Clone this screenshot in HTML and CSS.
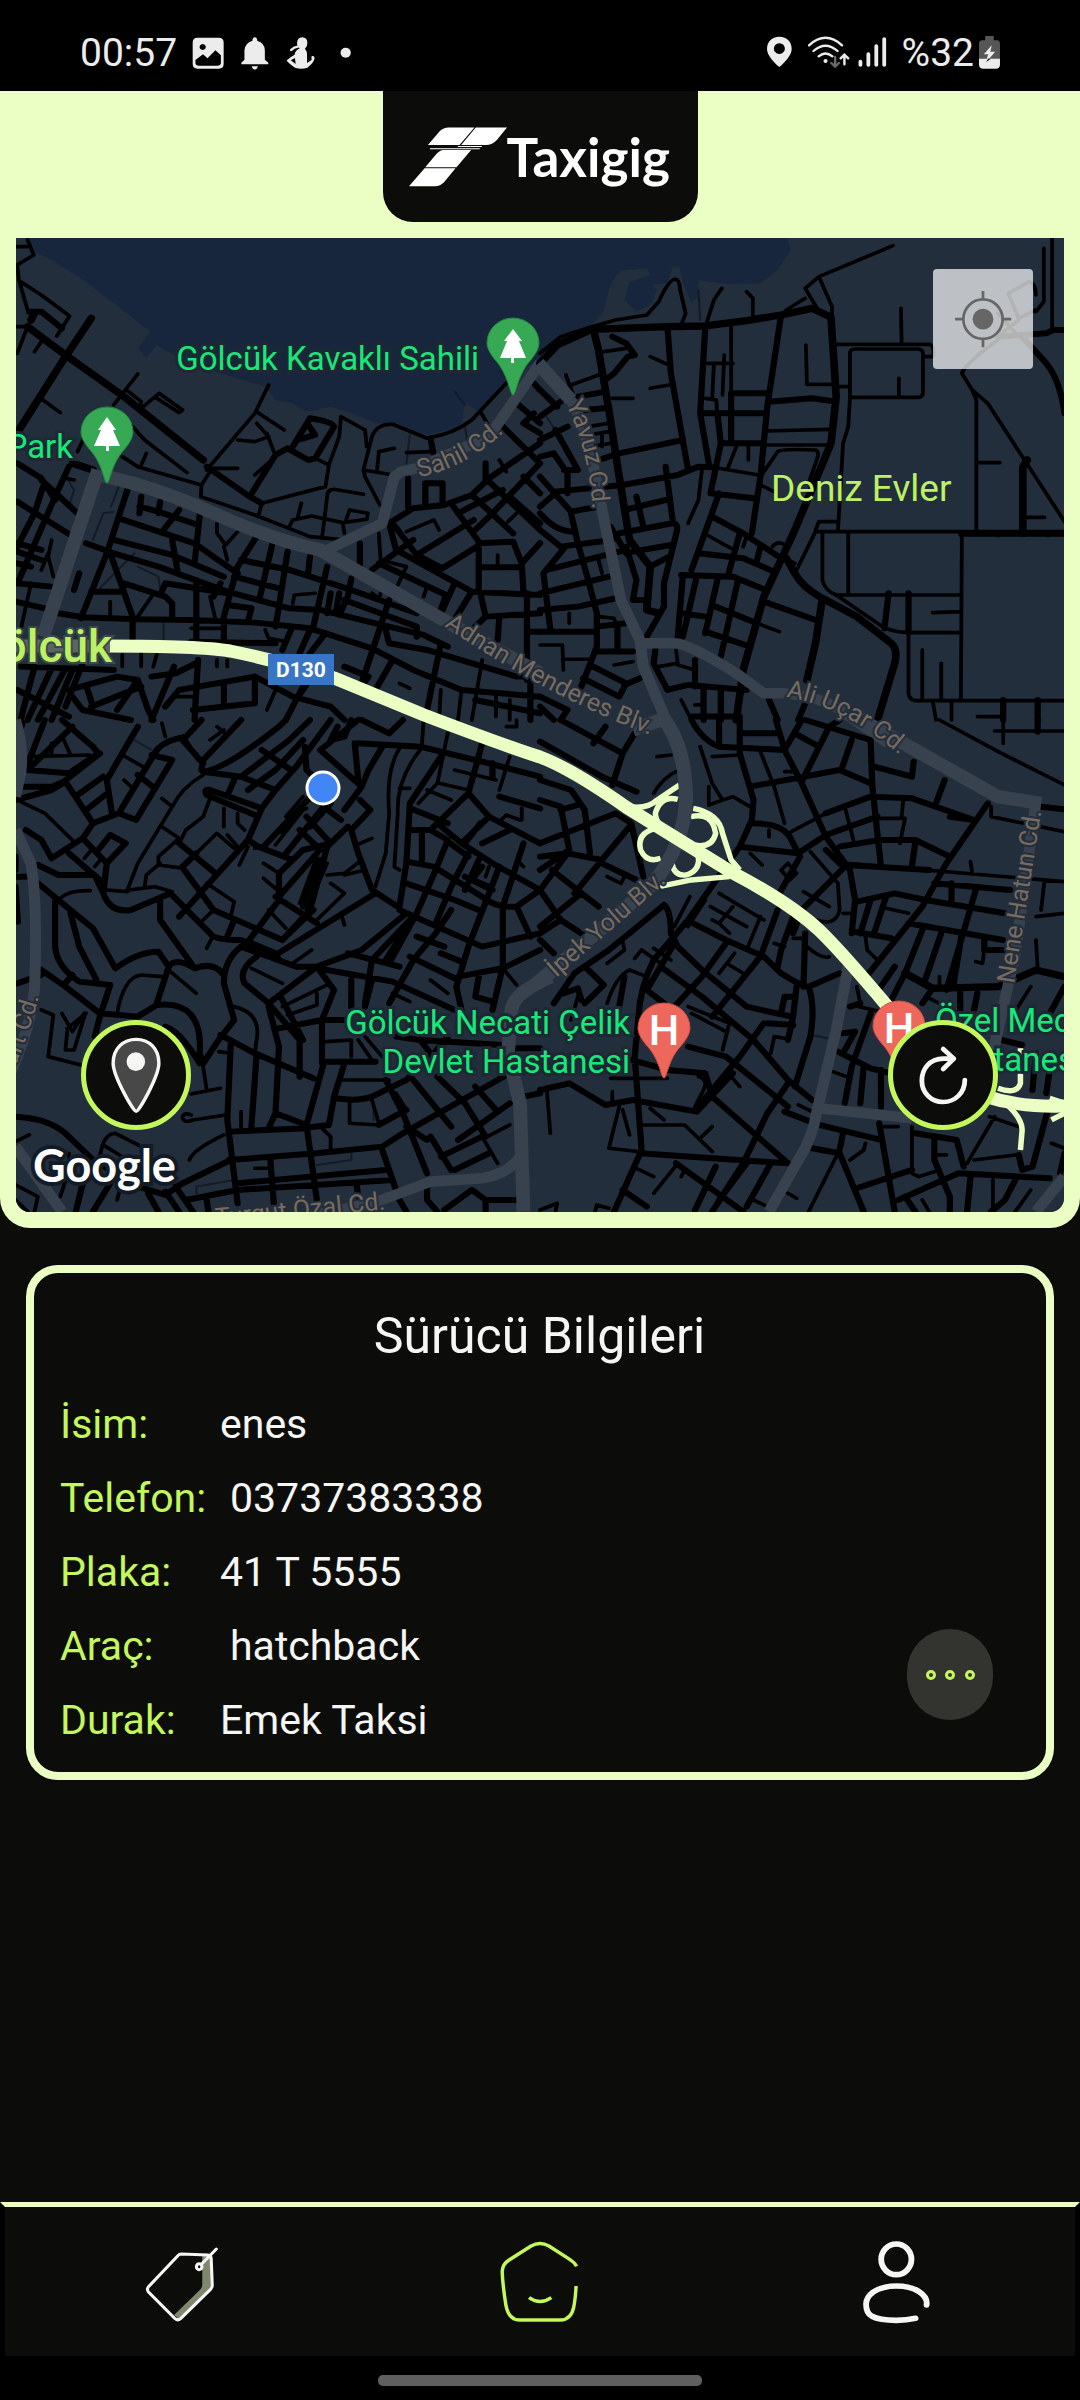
FILE: index.html
```html
<!DOCTYPE html>
<html lang="tr">
<head>
<meta charset="utf-8">
<meta name="viewport" content="width=device-width, initial-scale=1">
<title>Taxigig</title>
<link rel="stylesheet" href="styles.css">
</head>
<body>
<div class="statusbar">
  <div class="statusbar-left">
    <span class="status-text">00:57</span>
    <svg width="32" height="40" viewBox="558 100 93 120" preserveAspectRatio="none" aria-hidden="true"><path class="status-fill" fill-rule="evenodd" d="M574 114H636Q650 114 650 128V193Q650 207 636 207H574Q560 207 560 193V128Q560 114 574 114ZM568 181V191Q569 198 578 198H632Q641 198 642 190V167L626 152L603 176L590 164ZM589 133a9 9 0 1 0 .1 0Z"/></svg>
    <svg width="28" height="40" viewBox="702 100 81 120" preserveAspectRatio="none" aria-hidden="true"><path class="status-fill" d="M703 194V189L712 180V152Q713 130 735 123Q735 114 742 113Q749 114 749 123Q771 130 771 152V180L781 189V194ZM733 200H751Q748 210 742 210Q736 210 733 200Z"/></svg>
    <svg width="30" height="40" viewBox="836 100 87 120" preserveAspectRatio="none" aria-hidden="true"><path class="status-fill" fill-rule="evenodd" d="M883 113Q898 114 898 130Q898 142 891 147Q898 155 897 167V190L910 181V170Q918 166 919 175Q918 188 898 204Q880 210 862 204Q845 192 838 183Q840 178 861 165Q862 153 876 146Q868 141 868 130Q869 114 883 113ZM862 175L850 182L864 193Z"/><path class="status-line" d="M851 151Q858 143 870 141"/></svg>
    <svg width="24" height="40" viewBox="976 100 70 120" preserveAspectRatio="none" aria-hidden="true"><ellipse class="status-fill" cx="1013" cy="159" rx="15" ry="15"/></svg>
  </div>
  <div class="statusbar-right">
    <svg width="36" height="40" viewBox="659 100 105 120" preserveAspectRatio="none" aria-hidden="true"><path class="status-fill" fill-rule="evenodd" d="M695 111C717 111 731 126 731 148C731 166 712 188 695 202C678 188 659 166 659 148C659 126 673 111 695 111ZM695 131a16 16 0 1 0 .1 0Z"/></svg>
    <svg width="45" height="40" viewBox="776 100 131 120" preserveAspectRatio="none" aria-hidden="true"><path class="status-line" d="M779 137Q827 92 875 137M792 154Q827 122 862 154M807 170Q827 153 847 170M882 194V166M871 176L882 165L893 176"/><path class="status-line status-muted" d="M855 172V200M844 190L855 201L866 190"/><circle class="status-fill" cx="827" cy="184" r="6"/></svg>
    <svg width="39" height="40" viewBox="922 100 113 120" preserveAspectRatio="none" aria-hidden="true"><path class="status-bars" d="M929 186V196M952 163V196M975 139V196M998 118V196"/></svg>
    <span class="status-text">%32</span>
    <svg width="22" height="40" viewBox="1275 100 64 120" preserveAspectRatio="none" aria-hidden="true"><path fill="#565656" d="M1293 109H1318V122H1328Q1336 123 1336 132V180H1275V132Q1275 123 1284 122H1293Z"/><path class="status-fill" d="M1275 177H1336V196Q1335 207 1325 207H1287Q1276 207 1275 196ZM1312 137L1289 164H1302L1297 178H1304L1322 156H1308Z"/><path d="M1302 177L1295 188L1309 177Z"/></svg>
  </div>
</div>

<header class="top-panel">
  <div class="brand">
    <svg class="brand-mark" width="98" height="60" viewBox="87 104 295 180" aria-hidden="true"><path d="M144 158L180 116Q191 105 206 105H284L239 158ZM288 105H382L352 142Q338 158 318 158H244ZM192 173H274L230 225H136L165 190Q178 173 192 173ZM134 228H227L195 267Q183 282 165 282H87ZM234 161H306V164H234ZM150 168H300V171H150Z"/></svg>
    <span class="brand-name">Taxigig</span>
  </div>
  <section class="map" aria-label="Harita">
    <svg class="map-canvas" viewBox="16 238 1048 974" role="img" aria-label="Gölcük">
      <defs>
        <path id="p-sahil" d="M419 477Q466 468 504 432L560 380"/>
        <path id="p-yavuz" d="M566 404Q588 450 592 502V580"/>
        <path id="p-adnan" d="M444 626Q540 692 640 731L740 770"/>
        <path id="p-ali" d="M786 697Q840 706 890 747L950 796"/>
        <path id="p-ipek" d="M556 978L664 884L740 818"/>
        <path id="p-nene" d="M1014 984L1040 820L1053 738"/>
        <path id="p-turgut" d="M216 1226L480 1200"/>
        <path id="p-yurt" d="M9 1080Q28 1040 42 986L62 909"/>
      </defs>
      <rect class="land" x="16" y="238" width="1048" height="974"/>
      <g transform="translate(0 230) scale(.3444 .3333)">
        <path class="water" d="M70 0L90 60C150 85 200 125 250 155L437 305L400 355L425 385L455 345L520 385L640 430L770 470L800 510L850 520L890 545L960 530L1020 548L1090 580L1130 578L1240 615L1340 590L1350 520L1390 545L1470 460L1570 380V0Z"/>
        <path class="road dim" d="M345 770L322 830M270 930L300 850L330 845M1190 615L1180 700M1350 590L1358 640M290 1075L390 970M400 1010L460 1040L465 1075M475 1180V1240M195 745L215 780L200 830M1320 485L1350 525"/>
        <path class="road thin" d="M80 30L98 75L50 105L55 150L80 240M60 155L120 195L202 258L165 318M50 290H80L50 370M100 365L120 335M118 505L175 548M330 525L400 432M365 478L410 515L405 540L462 490L530 540L520 548L455 505M780 465L740 550L600 720M745 545L825 600M745 580L780 620L740 635L690 630M620 715H690M775 610L795 665M740 735L800 680M385 590L420 630L543 728M410 705L425 670M355 680L400 710L585 765L583 800L740 855L900 920L985 928M585 765L610 725M750 860L760 820L945 770L955 705L915 685M955 705L985 620L990 560L1060 600L1065 650M1055 720L1080 620Q1095 580 1140 583L1240 625Q1320 610 1370 570L1470 460M1055 720L1060 740L1103 825M1055 720L1130 733M1095 720L1100 665L1145 655M1180 668L1250 665M1395 545L1415 580M935 925L950 800Q950 778 970 778L1055 793M840 890L850 870L905 858L995 878L1065 868L1068 850L1015 840L1005 870M875 820L865 860M995 878L1000 910M630 880V910L655 945L690 905M45 50H80M555 1195H640M850 1120L855 1095L915 1090M320 1115V1160M400 1160L440 1100M610 1100L625 1165M355 1275V1310M410 1270V1310M455 1275L445 1310M630 1290v20M660 1290v20M510 1400h60M775 1440L800 1380M1180 905L1260 870L1275 900M1445 975V1010M1450 690L1470 725M1500 850L1475 875M1240 1070L1230 1100M1100 910L1105 990L1180 1010M1180 1010L1155 1065M1160 1360L1190 1375M1100 1110L1105 1090M150 930L140 980L155 1040M120 1020L140 970M90 1060L60 1200M1080 1090L1105 1110M770 1200L780 1225L830 1235M650 950L660 990M1400 1290L1370 1470M1340 1380L1330 1470M1280 1380L1275 1470M250 610L225 665M190 745L215 750M1440 1400V1460M1480 1410V1470"/>
        <path class="road mid" d="M600 710L725 800L760 820M725 800L800 675L835 655L895 690L915 685L970 590Q965 575 900 565L850 650M865 630L915 615L895 585M85 245L120 245L180 295M1250 625L1258 668M50 700L120 745L160 810M50 815L150 880L205 915M120 750L225 850M200 710L160 800L55 1050M125 770L100 850L50 950M50 940L120 960M50 965l70 25M50 1000L90 1010M45 1115L130 1135M170 1150L240 1162L400 1168L560 1170L740 1178L900 1195L945 1210M370 780L310 970L235 1165M345 865L565 940L640 995L690 1030M330 930L500 975L650 1040M250 940L330 970L460 1010L660 1085L840 1135L930 1140L1090 1180L1230 1215L1300 1250M320 970L385 1160V1225M580 855L565 1000M405 830L460 845L575 885M410 800L405 850M465 815L460 850M520 840L475 900M500 930L515 1020M745 920L690 1010L650 1160V1235M790 945L755 1100M835 965L810 1130L800 1190M900 980L895 1025M950 1010L910 1190M700 990L840 1020L1020 1080L1210 1150M680 1040L810 1075M1020 1045L1010 1100L985 1155M360 1060L480 1100L500 1120V1165M470 1085L480 1060L660 1090M570 1060V1230M555 1235L800 1240M660 1125L730 1135L720 1175M960 1090L950 1150M985 1090L975 1150M265 1085H360M230 1030L215 1080M45 1060L150 1070M640 1060L620 1100M1130 1110L1050 1360M1000 1110L1210 1190V1220M945 1210L1080 1255L1200 1320L1340 1380L1568 1400M845 1200L820 1260M900 1200L870 1270M945 1210L900 1270M1140 1290L1090 1380M1280 1240L1240 1440M1120 1200L1130 1240L1240 1260L1500 1340H1568M1380 1410L1568 1450M1540 1350V1470M1000 1310L1070 1340L1050 1370M1130 880L1200 835L1290 825L1370 795L1420 745L1568 640M1235 820V760H1285V820M1185 745V830M1310 820L1390 935V1080M1130 880L1150 960L1370 1085L1568 1095M1140 880L1210 975L1285 1015L1385 950M1210 975L1375 870M1390 940L1490 935L1515 1000L1520 1090M1390 1012H1515M1515 1000L1568 940M1370 795L1490 910M1410 745L1568 900M1330 850L1460 780M1380 900L1430 850L1568 700M1460 590L1568 700M1410 700V750M1500 520L1568 580M1550 460L1568 480M1080 1020L1200 930M1045 940V1005M1100 1000L1295 1095L1280 1140M1320 1060L1285 1140M1370 1085L1325 1160M1395 1090L1410 1160L1568 1150M1410 1160L1370 1200M1450 1160L1445 1230M1530 1090V1350M1530 1205H1568M60 1310L330 1320M100 1310L60 1470M150 1315L80 1470M190 1315L110 1470M210 1320L150 1470M240 1300L190 1430M200 1380L340 1340L400 1350L430 1440L445 1470M265 1430L410 1370M210 1400L240 1440L380 1470M50 1380L200 1460M505 1310L440 1470M440 1340L510 1330L570 1300M575 1290L565 1470M480 1430L520 1380L740 1340L850 1400L960 1430L1000 1470M650 1360V1430M560 1440L740 1420V1340M880 1370L830 1470M860 1410L930 1300M250 1365L270 1430M340 1440L400 1350M1520 740L1568 790M1480 800L1568 880M1550 550L1520 580L1568 610"/>
        <path class="road wide" d="M80 290L190 375L360 500L590 690M190 380L265 265M190 380L55 600M210 700L270 720M90 270l10-20"/>
        <path class="arterial" d="M285 720L125 1220M300 738Q450 770 620 850T930 960L1330 1195L1568 1330"/>
        <path class="arterial slim" d="M950 960L1110 880L1145 740L1165 725L1210 715L1420 620L1568 400"/>
      </g>
      <g transform="translate(540 230) scale(.3444 .3333)">
        <path class="water" d="M-3 385L60 320L150 285L185 245L200 180Q220 120 250 120L310 115L320 135L260 155L245 210L280 245L320 225L340 180L325 165L370 160L385 110H405L415 160L440 215L460 200V150L545 162L640 160L690 120L728 60L710 0H-3Z"/>
        <path class="road dim" d="M460 180L465 270M15 555L45 600"/>
        <path class="road thin" d="M0 370L60 320L150 290L220 270L310 255L345 215Q375 145 395 148Q405 150 407 180L423 250L410 285M655 603L840 598M645 645H835M485 400H560M505 400L500 505M535 375L530 495M480 505L512 510L515 560M640 740L690 665Q700 655 800 660Q812 665 805 685L780 760M545 715L570 650M605 650v40M520 715L635 735M470 720L460 810L430 880M485 915L555 955M590 950L600 920M675 950Q690 930 712 945M695 1205L630 1180M745 1020L800 905H1523M740 1000L720 990M820 910V1050Q825 1080 860 1095L980 1180Q1010 1205 1070 1208H1222M895 910V1090M860 1095H1222M1225 905L1222 1410M1140 1148L1220 1145M1070 1208V1390Q1072 1410 1090 1412H1523M1110 1260V1410M1165 1300V1410M1270 1460H1340M1140 1412L1150 1470M1195 1415V1470M800 900L810 875H865M865 905L880 640L895 590L900 505M900 505V370Q900 357 915 357H1100Q1112 360 1112 370V490Q1110 502 1100 502H900M1042 445V500M860 343H1130Q1145 345 1142 380H1115M1048 235L1050 343M772 345L775 463H860M860 470H900M1267 905V510L1255 480L1300 520L1523 875M1255 480L1225 430Q1235 400 1330 330M1487 0V300M1463 55V215L1440 245M1330 250L1390 320M1360 190L1420 155Q1440 160 1440 195M1360 190L1390 265L1440 240M1270 698H1335M1410 862H1465M1220 915H1523M1330 905v12M1475 905v12M1025 47L810 140L770 175L805 235M810 140L848 230V265M770 205L715 240M485 275L505 210L528 175M600 185L618 205V270M90 465L170 435M75 435L95 490M185 365L250 355M320 380L370 403M320 475L375 465M210 505H270M140 590L200 580M140 615L200 605M180 615V650M150 650L205 640M85 1150v30M170 1160L215 1165L220 1180M0 1245H65L68 1320M65 1288H140M215 1305L270 1295M345 1310L400 1300L395 1260M400 1305L450 1320M410 1410L440 1470M450 1425h20M170 990L180 1030M640 765L680 785M555 290V490M1390 270L1340 310"/>
        <path class="road mid" d="M370 290L380 430L430 720M480 290L465 550L490 700M700 255L660 530L640 740L615 910M555 490V640M555 490H665M665 515L790 505L860 515M465 550H655M515 550L525 640L495 790L620 805M530 640H640M170 690L230 670L415 630M45 785L240 765L400 735L460 710L500 712M365 710L385 870M280 800L300 890M245 840L365 810M230 910L385 880Q400 880 398 900L360 1060V1130L310 1220M270 965L380 945M320 1010L375 980M520 790L440 1020M500 860L590 910L700 985M630 990L640 950M460 970L590 985L680 1025M580 910L545 1040M410 1035L560 1040L655 1080M415 1035L400 1220M455 1040L415 1220M515 1050L480 1210M575 1050L525 1280M410 1150L480 1160M510 1130L630 1180M480 1205L610 1250M650 1115L800 1170M1012 1090L1000 1195M1070 1090V1208M1345 1410V1470M1445 1410V1470M1400 320L1470 400Q1510 450 1523 550M1330 320L1470 310L1490 300H1523M210 320L250 340L275 375L255 380L215 430L190 450M110 500L190 485M130 540L200 533M0 560L60 515M0 480L50 530M0 630L80 590M45 600L110 720H70M0 680L40 670L80 730V790M0 830L50 785M0 740L90 845L170 830M0 850Q40 900 90 905M90 850L110 940L140 1050L165 1150V1250L120 1370M0 900L60 950L210 930M70 955L10 1030L30 1200M20 1020L250 960M0 1090L200 1040M0 1140L110 1130L220 1105M250 950L280 1050L270 1110H310V1140M205 890L250 970M0 1205H160M165 1190L250 1180M225 1190V1260M165 1265H270M145 1305L250 1360L230 1400M125 1345L230 1400M245 1365L290 1345M0 1400L80 1440L60 1470M0 1430L40 1470M335 1260L330 1300L370 1380L430 1365L600 1380M450 1290V1370M475 1370V1470M525 1380V1470M440 1460H580M665 1410L690 1470M770 1420L750 1470"/>
        <path class="road wide" d="M0 400L50 345L150 298L370 290L480 288L600 272L700 255L790 235L845 262L860 500L845 640L740 900L650 1100L590 1320L570 1470M155 298L170 360L200 540L230 740L260 930L320 1010L310 1140L345 1150M715 985L740 1030Q760 1070 820 1105L920 1160L1020 1240Q1040 1260 1030 1300L980 1470M820 1105L800 1240L775 1350M1402 910V710L1415 690"/>
        <path class="arterial" d="M-5 400L90 510"/>
        <path class="arterial slim" d="M90 510Q140 600 172 800L235 1110L290 1230L300 1310L370 1480M290 1240H390Q430 1240 570 1330L650 1390H705Q830 1400 900 1460L1010 1540"/>
      </g>
      <g transform="translate(0 720) scale(.3444 .3333)">
        <path class="road dim" d="M920 1335L1020 1320V1300M570 1420V1400L680 1380M390 60L440 90M1085 1150V1200"/>
        <path class="road thin" d="M60 245L130 280L210 360M85 110L260 105M150 70v30M185 60l20 45M355 105L415 140M360 180L385 205M470 10L480 50M1230 0L1225 75M610 235L590 290L540 330L520 370M590 165Q530 200 500 260L400 430L370 510M470 235L500 260M470 320L520 355M520 355L460 410V435L535 445M420 500L425 465L465 430M570 400L630 340L680 385M650 265V320M690 280V310L710 330M695 435L720 380M765 430L810 460M765 475L805 510M245 415L265 390M275 440L295 415M175 535Q200 510 262 512M375 510L450 500L500 515M310 510L370 515M495 755L570 820M340 880Q360 770 410 765L470 770M120 870L155 885L140 1010L235 1035M180 880L210 935L245 880M195 935L190 990L215 990L245 890M195 925L250 880M730 745L820 790M820 860L950 795M835 885L920 855V820M680 860Q760 880 745 960L740 1000M635 995L670 1000M600 1110L590 1040M555 1122L640 1105M555 1185Q530 1175 530 1195Q535 1210 560 1200L655 1185M700 1175V1220M550 1320Q560 1290 650 1245M740 1345h40M935 1225L960 1250V1290M290 1310Q300 1240 335 1240L430 1290M45 1265L85 1245M300 1275L370 1320M200 1300V1350L175 1430M45 1395L110 1430L100 1475M45 1440L80 1475M350 1400L340 1440M1160 85Q1120 150 1130 280L1120 400L1090 500M1220 90Q1150 180 1155 280L1145 440L1160 450M1160 205h30M1240 210L1310 240M1275 190L1360 210M1300 40L1270 190L1215 250M1320 150L1440 180M1455 300L1470 285L1510 300M1515 265v35M1500 420l20 20M1420 440l-10 30M1140 820l50 25M1250 780L1300 820M1460 745L1500 795M945 965L1020 960V1010M990 1080H1130M1015 1150V1210L1100 1215M1080 1140L1100 1210M1415 1250L1480 1215M1040 960L1080 1020M1060 950L1110 1010M870 550L920 410M890 570L950 430M600 490L680 545L670 590M590 600L615 575M600 685L615 655M850 730L905 690M990 580L1000 615M960 490L1000 520L920 600M950 465L1000 460L1050 420M1000 465L1060 450M1035 375L1080 355M830 290L880 230M800 375L880 270M740 385L770 375M660 345L690 380M780 570L830 625M1400 1250L1445 1330M1150 1120L1180 1170M610 60L650 30M540 60L575 120M630 20L660 45M1480 110L1450 210M1470 20L1500 20V0M820 340L860 280L890 265"/>
        <path class="road mid" d="M65 10L50 60M130 0L85 120L80 150L200 160L285 100L270 80L180 0M85 145L210 20M60 200H150L185 185L290 100M45 240L150 210L190 185L270 310L240 355L150 415L120 360L75 330M250 270L305 225M270 310L345 280L395 300L500 120L440 105M225 225L300 170M310 180L325 280M310 180L400 20M455 90L345 280M455 90Q480 60 540 50L585 0M400 165L450 205M530 60L590 130M585 150L590 120L700 0M590 155L700 170L800 210M590 155Q650 150 810 20L830 0M680 180L665 215M700 170L840 60L900 0M760 90L845 150M720 210L800 150L880 60M800 210L860 140L960 0M885 80L890 150L940 200M930 90L1050 200L1000 270M1030 70L1040 180M930 90L1040 0M1040 70L1220 80L1400 125L1568 170M1050 0L1130 40L1170 0M760 265L610 210Q590 205 600 225L740 285M760 265L720 360L520 590M720 360L750 380L850 420M760 265L800 210M770 375L920 210M515 365L620 455M810 460V540L720 665M530 440L570 400M535 450L620 570L820 660L910 570M110 435L170 465L275 465L300 520Q320 580 380 570L495 520L610 640Q620 660 700 660L800 705L1090 520M240 355L310 430L300 520M285 390L320 345L365 370L310 430M200 400L290 480M45 470H75M110 490L175 545L270 625L335 745Q400 695 460 695L490 740Q510 710 565 745Q620 725 645 760M160 545V680Q165 740 230 785L320 795L290 890M205 580L230 680L280 780M465 540V600L565 745M490 740L455 850M120 750L190 800L290 880L400 890L455 855Q590 840 580 1000L590 1030L635 960L680 900L650 790Q650 720 700 680M50 790L120 765M185 795L210 765M480 920Q520 930 580 1030M290 890L275 950M700 680L860 740H920L1050 690L1180 580M745 710Q690 750 710 790L780 850L870 960V1070M780 850L920 740M920 740L970 810L935 900V1030M780 860L810 980L800 1180M810 925L935 900H1000M815 830L880 960M640 945L740 1000L910 1075M670 970L660 1200L690 1450M745 1005L730 1220M670 1235L890 1225M800 1180L890 1215M780 1225L800 1180M940 1030L890 1215L920 1440M665 1320L920 1300L1110 1280L1170 1240L1480 1060M520 1395L670 1320M690 1390L1120 1350M540 1440L690 1410L1140 1380M785 1320L795 1450M1110 1290L1150 1410M1035 1390L1040 1430M45 1190Q140 1195 190 1240L270 1320L400 1400L480 1425L530 1390M255 1330L220 1475M320 1390L270 1475M430 1420L460 1475M480 1415L520 1475M510 1400L560 1475M600 1440L605 1475M1050 200L1070 150L1110 80M1045 240L1075 270L1020 330L1040 400L1080 510L1155 560M1280 110L1190 250L1180 430L1160 560M1400 70L1360 220L1250 330H1190M1190 265L1300 310M1430 130v40M1360 220L1420 290L1340 370L1270 310M1420 290L1568 370M1450 230L1568 265M1250 330L1300 360L1265 450L1210 580L1130 730M1225 345V420M1180 425L1260 440L1400 530Q1440 565 1500 560L1568 510M1400 370L1480 330M1340 370L1430 430L1568 510M1395 310L1350 370M1360 400L1310 500L1265 610M1390 420L1350 510M1300 365L1360 410M1400 440L1370 480L1430 510M1350 470L1420 500M1450 440L1360 680L1325 800L1340 870M1520 370L1460 560V740L1430 870M1180 490L1320 540L1390 570M1160 570L1400 680L1568 640M1310 570L1265 640L1200 720L1130 850M1200 590L1120 720M1190 600L1080 720L1060 850M1010 700L1160 740M920 745L1140 785L1320 870M1020 780V860M1080 780L1060 860M1190 710L1290 760L1330 780M1330 770L1460 745L1568 690M1210 650L1290 680M1280 700L1340 725M1390 770L1380 830L1430 845M1500 560L1540 650M950 1025H1090M1000 1030L970 1130L955 1215L900 1222M975 1135Q1040 1145 1080 1130L1180 1080L1300 960M1100 1215L1180 1170M1120 1080L1170 1180L1240 1360M1200 1080L1310 1220M1250 1250L1310 1350M1180 1220L1240 1260M1270 1070L1350 1150L1410 1250M1380 1100L1440 1170M1330 1260L1480 1150M1280 1310L1400 1250M1320 1350L1420 1300M1240 1400V1440L1270 1475M1290 1470L1370 1410L1410 1440H1500M1150 950L1220 960L1460 975M1220 960L1250 1000M1410 1440V1475M1300 950L1260 1000M1500 985H1568M1520 1130L1568 1120M1160 1440L1180 1475M890 290L960 370L880 390L810 460M1010 320L950 380L900 570L820 660M920 400L810 530M830 400L940 260L990 300M960 250L900 320M870 330L930 390M800 530L920 610M660 650L680 600M45 410v40M45 500L52 605M980 20L960 60L1000 50L1020 0M720 665L800 700L810 720M930 420L880 560"/>
        <path class="arterial slim" d="M45 0Q70 80 60 160L45 230M45 330L90 430Q110 560 100 810Q90 920 30 1060M45 1280L180 1475M1095 1445L1250 1385L1400 1375Q1480 1360 1510 1310M1100 1445L850 1500"/>
        <path class="arterial" d="M1600 770Q1490 820 1485 870L1475 1000L1510 1150L1520 1475"/>
      </g>
      <g transform="translate(540 720) scale(.3444 .3333)">
        <path class="road dim" d="M790 945L835 955"/>
        <path class="road thin" d="M340 110L380 105M330 220Q360 170 395 155M465 80L500 190L530 240L490 255M490 200v50M530 240L560 230L610 260M500 110L580 105M710 155h30M640 95L680 200L710 310M665 330v20M885 260L910 360M980 295H1060L1045 370M1055 240L1050 290M610 400L645 435M700 450L720 430L745 460L725 480ZM785 395L865 490L870 570Q860 620 800 600M765 515L840 560M905 580H880M1005 565L1070 580M1250 425L1255 460M945 650L950 690L980 720M1440 590L1523 580M1465 480L1455 570M1310 260V290L1523 335M1160 0L1340 100L1523 195M1320 33H1523M1345 0V70M1440 660L1445 745M1290 690L1285 730L1265 725M1160 770V800M1425 800L1370 890M435 530L390 620M240 665L245 690L195 730M480 540L430 620M520 520L650 600M495 560L600 620M560 560L520 610L550 640M500 600L520 610M640 590L600 690M735 655H770M680 670L710 680M775 680Q820 720 840 710M565 700L520 760M550 735L590 760M330 685L380 720M275 715L295 690L350 730M195 850Q220 770 260 750L310 770M430 860L550 910L530 990M440 880L540 935M670 1000L680 950L710 955M275 1075H370M460 1070Q490 1080 475 1110L450 1160M205 1075H275M210 1115v40M20 1110L30 1240M230 1160L200 1285L330 1300M240 1170L260 1245M320 1165L360 1200M300 1215H420L500 1295M470 1250L500 1220M555 1070L580 1100M750 1155L790 1175M280 1345L330 1370M400 1330L330 1420M420 1350l-10 20M720 1420l25 15M620 1440L660 1460M865 1300L780 1475M905 855L1010 880M850 1055L890 1070M1080 1220V1360L1100 1370L1160 1350M1155 1305H1180M1260 1320L1380 1305M1305 1190L1390 1220M1000 1220H1040M945 1270L940 1290L900 1320M1485 1270L1523 1285M1110 1440L1130 1475M1315 1380V1475M730 335L830 280M0 1470L50 1450L45 1475M160 1475L165 1455L200 1465M195 470L235 490L250 460M1380 1475L1425 1410M890 430L1523 485M110 830L90 900M1160 850L1120 830M930 850L920 800M1240 1330L1320 1190"/>
        <path class="road mid" d="M0 65L180 170L280 215M60 0L240 100L275 40M240 100L210 195M155 70L190 20M0 180L90 210L130 270L145 400M0 240L60 260L85 390L0 450M60 270L110 255M0 370L220 280L265 310L300 470M0 410L80 400L180 420L260 320M80 400L0 510M35 450L170 560M100 520L180 420M0 620L120 520M0 510L60 600L150 660M0 660L40 700M60 600L0 640M180 430L280 480M440 0Q470 60 520 80L710 90L760 0M520 0V80M580 0V100L620 240L615 300L580 380L430 600L330 720M685 0L710 90L760 190L830 350L900 450L915 540L905 640M590 40H690M610 200L870 150L960 190M760 185L840 20L870 0M740 40L810 80M770 0L960 60L965 200L990 440M905 60L875 150M970 140L1080 170L1085 125M1175 180L1150 250M620 310Q700 310 725 350L755 410M580 380L750 400L830 345L980 290M830 280L960 230L1080 235L1260 300M870 380L985 360L1090 360L1190 410M1090 365L1080 440M1190 290L1260 300M1300 250L1180 430L1110 560L955 760M890 435L1130 450M755 410L690 530M885 440L760 570L735 640M830 390L880 440M920 545L1030 520L1120 540L1350 580M960 540L930 640M1005 530L970 640M910 635L1020 655M1145 490L1365 510M1195 490V540M1265 510L1240 600L1180 810M1070 610L1345 660M1110 630L1060 760M1165 640L1115 790M1225 640L1200 800M1290 660V690H1345M1455 260L1523 268M1445 0V35M1030 740L970 830M1060 760L1020 840M1140 805L1110 850M1270 820L1260 870M1220 820V880M1523 800L1480 880M360 555L200 690L100 760L40 850M360 555Q380 570 380 640L400 680L470 750L600 860L730 890M130 740L185 795L130 850M70 820L110 805L120 840M330 720Q290 800 285 900L275 1010L295 1290L215 1475M445 610L540 660L650 710L700 760Q760 800 780 800L870 760M390 670L310 810L360 850M690 570L640 710L500 890M735 590L700 690L690 740M770 640L765 800M780 800Q800 860 785 950L740 1100M745 800L735 890L720 960M660 910L735 915M700 880L710 830H735M540 670L470 770L390 860M245 770L230 860M350 740L470 830L620 960L720 1080L790 1140M650 910L580 1010L500 1110L450 1170M430 980L540 1010L720 1160M720 1090L660 1180L590 1330L500 1475M265 1020L370 1050L480 1060L500 1130L720 1330L290 1300M0 1110L85 1090L190 1155L270 1140L455 1175L560 1060M710 1175L810 1215L990 1260M395 1330L590 1475M510 1340L450 1470M600 1330L520 1440M670 1330L600 1460M240 1410L310 1460M790 1285L870 1300L940 1475M880 940L915 935L885 990M900 860L930 850M960 880L905 1040L885 1150M865 995L960 1045L1020 1060M940 1040L930 1150M990 1050V1160M880 1240L870 1290M985 1210L1030 1475M1145 1250V1320L1190 1430L1190 1475M1090 1240L1210 1260L1230 1340M920 1405L1080 1350M1040 1440L1215 1360L1480 1375M1060 1430L1090 1475M1250 1370L1240 1475M1380 1380L1350 1440L1310 1475M1390 1305L1400 1350L1430 1340L1480 1150M1440 1000L1430 1110M1480 1050L1470 1120M1340 960L1400 975M1523 1300L1510 1360"/>
        <path class="road wide" d="M1060 760L1140 805L1330 800L1440 750L1523 770"/>
        <path class="arterial slim" d="M1440 240L1430 320L1380 700L1315 1000M895 740L860 930L805 1170Q790 1260 750 1320L665 1475M810 1165L1080 1195M1523 1370L1440 1475"/>
        <path class="arterial" d="M900 -20L1330 230L1455 250M270 30L350 0"/>
        <path class="ramp" d="M250 258Q310 270 340 240L405 195M400 238Q350 225 335 280Q335 320 400 350M335 325Q280 340 292 390Q310 430 350 415M383 430Q390 470 425 465Q470 450 458 400M438 290Q500 275 510 340Q500 385 450 375M445 265Q520 280 530 340L555 420L580 450M345 500L440 480L550 470"/>
        <path class="ramp" d="M1330 1105Q1385 1125 1395 1090V985M1340 1140Q1400 1190 1400 1230L1395 1290M1485 1200L1523 1180M1480 1135L1523 1150"/>
      </g>
      <path class="arterial-over" d="M661 715Q686 745 686 800Q684 845 652 885Q600 930 535 985"/>
      <path class="highway" d="M108 646Q200 646 230 651Q275 660 334 678L424 715Q500 744 540 757Q570 768 626 807L733 873Q790 903 819 930Q840 950 888 1007L960 1085Q1000 1108 1064 1106"/>
      <path class="highway faded" d="M16 646H110"/>

      <g class="street-label">
        <text><textPath href="#p-sahil">Sahil Cd.</textPath></text>
        <text><textPath href="#p-yavuz">Yavuz Cd.</textPath></text>
        <text><textPath href="#p-adnan">Adnan Menderes Blv.</textPath></text>
        <text><textPath href="#p-ali">Ali Uçar Cd.</textPath></text>
        <text><textPath href="#p-ipek">İpek Yolu Blv.</textPath></text>
        <text><textPath href="#p-nene">Nene Hatun Cd.</textPath></text>
        <text><textPath href="#p-turgut">Turgut Özal Cd.</textPath></text>
        <text><textPath href="#p-yurt">Yurt Cd.</textPath></text>
      </g>
      <rect x="268" y="654" width="66" height="31" fill="#3875c6"/>
      <text class="shield" x="301" y="677">D130</text>
      <text class="district" x="771" y="501">Deniz Evler</text>
      <text class="city" x="112" y="662">Gölcük</text>
      <g class="poi end">
        <text x="479" y="370">Gölcük Kavaklı Sahili</text>
        <text x="73" y="458">Park</text>
        <text x="630" y="1034">Gölcük Necati Çelik</text>
        <text x="630" y="1073">Devlet Hastanesi</text>
      </g>
      <g class="poi">
        <text x="935" y="1032">Özel Medar</text>
        <text x="935" y="1071">Hastanesi</text>
      </g>
      <g class="pin park">
        <path d="M513 395C510 395 509 377 497 362C489 353 487 347 487 343A26 25 0 1 1 539 343C539 347 537 353 529 362C517 377 516 395 513 395Z"/>
        <path class="glyph" d="M513 329L522 341H519L526 358H514V363H511V358H500L507 341H504Z"/>
      </g>
      <g class="pin park">
        <path d="M107 483C104 483 103 465 91 451C83 442 81 436 81 432A26 25 0 1 1 133 432C133 436 131 442 123 451C111 465 110 483 107 483Z"/>
        <path class="glyph" d="M107 417L116 430H113L120 446H109V451H106V446H94L101 430H98Z"/>
      </g>
      <g class="pin hospital">
        <path d="M664 1078C661 1078 660 1060 648 1047C640 1038 638 1032 638 1028A26 25 0 1 1 690 1028C690 1032 688 1038 680 1047C668 1060 667 1078 664 1078Z"/>
        <text x="664" y="1045">H</text>
        <path d="M899 1076C896 1076 895 1058 883 1045C875 1036 873 1030 873 1026A26 25 0 1 1 925 1026C925 1030 923 1036 915 1045C903 1058 902 1076 899 1076Z"/>
        <text x="899" y="1043">H</text>
      </g>
      <circle cx="323" cy="788" r="16" fill="#4285f4" stroke="#fff" stroke-width="3"/>
      <text class="map-credit" x="33" y="1182">Google</text>
    </svg>
    <button class="locate" type="button" aria-label="Konumum">
      <svg width="100" height="100" viewBox="1141 117 290 299" preserveAspectRatio="none" aria-hidden="true"><ellipse cx="1286" cy="267" rx="57" ry="59"/><ellipse class="dot" cx="1286" cy="267" rx="30" ry="31"/><path d="M1286 183V208M1286 326V351M1205 267H1229M1343 267H1368"/></svg>
    </button>
    <button class="round-button pick" type="button" aria-label="Konum seç">
      <svg width="100" height="100" viewBox="251 915 291 300" preserveAspectRatio="none" aria-hidden="true"><path fill="#484848" stroke="#f6f6f4" stroke-width="10" d="M397 1174C388 1174 330 1068 330 1030C330 985 360 958 397 958C434 958 463 985 463 1030C463 1068 406 1174 397 1174Z"/><ellipse cx="396" cy="1025" rx="27" ry="28" fill="#f6f6f4"/></svg>
    </button>
    <button class="round-button reload" type="button" aria-label="Yenile">
      <svg width="100" height="100" viewBox="1025 915 291 300" preserveAspectRatio="none" aria-hidden="true"><path fill="none" stroke="#f6f6f4" stroke-width="14" stroke-linecap="round" stroke-linejoin="round" d="M1234 1080C1234 1118 1206 1146 1171 1146C1136 1146 1109 1118 1109 1082C1109 1046 1132 1017 1171 1016H1202M1171 987L1202 1016L1171 1047"/></svg>
    </button>
  </section>
</header>

<main class="content">
  <section class="driver-card">
    <h1>Sürücü Bilgileri</h1>
    <div class="driver-body">
      <dl class="driver-info">
        <dt>İsim:</dt><dd>enes</dd>
        <dt>Telefon:</dt><dd class="inset">03737383338</dd>
        <dt>Plaka:</dt><dd>41 T 5555</dd>
        <dt>Araç:</dt><dd class="inset">hatchback</dd>
        <dt>Durak:</dt><dd>Emek Taksi</dd>
      </dl>
      <button class="more" type="button" aria-label="Daha fazla">
        <svg width="54" height="14" viewBox="0 0 54 14" aria-hidden="true"><circle cx="8" cy="7" r="3.5"/><circle cx="27" cy="7" r="3.5"/><circle cx="47" cy="7" r="3.5"/></svg>
      </button>
    </div>
  </section>
</main>

<nav class="tabbar" aria-label="Ana menü">
  <a href="#kampanya" aria-label="Kampanyalar"><svg width="88" height="88" viewBox="403 142 256 264" preserveAspectRatio="none" aria-hidden="true"><path fill="#7f886c" d="M587 194H612V290L520 385L505 373L580 298Q587 291 587 282Z"/><path stroke="#f6f6f4" d="M526 190L603 193Q612 194 613 203L616 284Q616 291 611 296L524 384Q516 391 508 384L430 303Q425 296 430 289L516 195Q520 190 526 190ZM586 219L628 175"/><ellipse cx="578" cy="228" rx="8" ry="9" stroke="#f6f6f4"/></svg></a>
  <a href="#anasayfa" aria-label="Ana sayfa" aria-current="page"><svg width="88" height="88" viewBox="1440 142 256 264" preserveAspectRatio="none" aria-hidden="true"><path class="lime" d="M1674 227Q1670 216 1650 203L1594 166Q1568 151 1542 166L1478 208Q1459 220 1458 242Q1459 280 1469 345Q1477 387 1508 388H1628Q1658 387 1666 350Q1671 325 1673 286M1536 321Q1568 344 1601 321"/></svg></a>
  <a href="#profil" aria-label="Profil"><svg width="88" height="88" viewBox="909 142 256 264" preserveAspectRatio="none" aria-hidden="true"><g class="bold"><ellipse cx="1035" cy="206" rx="44" ry="46"/><path d="M1123 343Q1127 320 1100 302Q1075 286 1035 286Q995 286 968 304Q947 320 947 340Q947 368 964 377Q985 389 1035 389Q1065 389 1091 383"/></g></svg></a>
</nav>
<div class="gesture"><span></span></div>
</body>
</html>
```
FILE: styles.css
```css
:root {
  --ink: #0c0d0a;
  --pale: #ebffc5;
  --lime: #c3f75c;
  --text: #f6f6f4;
  --land: #232e3c;
}

* { box-sizing: border-box; }

body {
  margin: 0;
  min-height: 100vh;
  display: flex;
  flex-direction: column;
  background: var(--ink);
  color: var(--text);
  font-family: Roboto, "Liberation Sans", sans-serif;
}

button {
  padding: 0;
  border: 0;
  cursor: pointer;
}

svg { display: block; }

/* status bar */
.statusbar {
  display: flex;
  justify-content: space-between;
  align-items: center;
  height: 91px;
  padding: 15px 79px 0 80px;
  background: #000;
  color: #ececec;
}
.statusbar-left, .statusbar-right { display: flex; align-items: center; }
.statusbar-left { gap: 17px; }
.statusbar-right { gap: 5px; }
.status-text { font-size: 39px; line-height: 40px; }
.statusbar-left .status-text { margin-right: -2px; }
.status-fill { fill: #ececec; }
.status-line { fill: none; stroke: #ececec; stroke-width: 7; stroke-linecap: round; }
.status-line.status-muted { stroke: #6a6a6a; }
.status-bars { fill: none; stroke: #ececec; stroke-width: 11; stroke-linecap: round; }

/* brand and map */
.top-panel {
  padding: 0 16px 16px;
  background: var(--pale);
  border-radius: 0 0 30px 30px;
}
.brand {
  display: flex;
  align-items: center;
  width: 315px;
  height: 131px;
  margin: 0 auto 16px;
  padding-left: 26px;
  background: var(--ink);
  border-radius: 0 0 30px 30px;
}
.brand-mark { fill: #fff; flex: none; }
.brand-name {
  color: #fff;
  font: 700 53px/64px Lato, sans-serif;
}
.map {
  position: relative;
  overflow: hidden;
  border-radius: 0 0 14px 14px;
  background: var(--land);
}
.map-canvas { width: 100%; height: auto; }
.land { fill: var(--land); }
.water { fill: #17263c; }
.road { fill: none; stroke: #000; stroke-linecap: round; stroke-linejoin: round; }
.dim { stroke: #131b26; stroke-width: 6; }
.thin { stroke-width: 11; }
.mid { stroke-width: 18; }
.wide { stroke-width: 22; }
.arterial, .arterial-over { fill: none; stroke: #38414e; stroke-width: 40; stroke-linejoin: round; }
.arterial.slim { stroke-width: 32; }
.arterial-over { stroke-width: 14; }
.ramp { fill: none; stroke: var(--pale); stroke-width: 16; }
.highway { fill: none; stroke: var(--pale); stroke-width: 13; }
.highway.faded { stroke: #5d6467; }
.street-label text {
  font-size: 25px;
  fill: #776b5d;
  stroke: #232e3c;
  stroke-width: 4px;
  paint-order: stroke;
}
.poi text {
  font-size: 33px;
  fill: #17e879;
  stroke: #1c2833;
  stroke-width: 6px;
  paint-order: stroke;
}
.poi.end text { text-anchor: end; }
.district { font-size: 37px; fill: #bdf163; }
.city {
  font-size: 46px;
  font-weight: 500;
  text-anchor: end;
  fill: #bdf163;
  stroke: #3b4a45;
  stroke-width: 4px;
  paint-order: stroke;
}
.shield { font-size: 21px; font-weight: 700; text-anchor: middle; fill: #fff; }
.park { fill: #37a955; stroke: #238a3f; }
.hospital { fill: #ee675c; stroke: #dc4a3f; }
.pin .glyph { fill: #fff; stroke: none; }
.pin text {
  font-size: 43px;
  font-weight: 500;
  text-anchor: middle;
  fill: #fff;
  stroke: none;
}
.map-credit {
  font: 700 45px Lato, sans-serif;
  fill: #fff;
  stroke: #131c26;
  stroke-width: 8px;
  paint-order: stroke;
}

.locate {
  position: absolute;
  top: 31px;
  right: 31px;
  border-radius: 4px;
  background: rgba(255, 255, 255, .7);
}
.locate svg { fill: none; stroke: #666; stroke-width: 8; }
.locate .dot { fill: #666; stroke: none; }
.round-button {
  position: absolute;
  bottom: 82px;
  border: 5px solid var(--lime);
  border-radius: 50%;
  background: var(--ink);
}
.pick { left: 65px; }
.reload { right: 66px; }

/* driver details */
.content { flex: 1; padding: 37px 26px; }
.driver-card {
  border: 8px solid var(--pale);
  border-radius: 32px;
  padding: 30px 27px 15px 26px;
}
.driver-card h1 {
  margin: 0 0 18px;
  font-size: 50px;
  font-weight: 400;
  line-height: 66px;
  text-align: center;
}
.driver-body {
  display: flex;
  justify-content: space-between;
  align-items: flex-end;
}
.driver-info {
  display: grid;
  grid-template-columns: 160px auto;
  margin: 0;
  font-size: 41px;
  line-height: 74px;
}
.driver-info dt { color: var(--lime); white-space: nowrap; }
.driver-info dd { margin: 0; }
.driver-info .inset { padding-left: 10px; }
.more {
  display: flex;
  align-items: center;
  justify-content: center;
  width: 86px;
  height: 91px;
  margin: 0 26px 37px 0;
  border-radius: 43px;
  background: #33342f;
}
.more svg { fill: none; stroke: var(--lime); stroke-width: 3; }

/* bottom navigation */
.tabbar {
  display: grid;
  grid-template-columns: repeat(3, 1fr);
  align-items: center;
  justify-items: center;
  height: 154px;
  border: 5px solid #000;
  border-top-color: var(--pale);
  border-bottom: 0;
}
.tabbar svg { fill: none; stroke-width: 9; stroke-linecap: round; }
.tabbar .lime { stroke: var(--lime); stroke-width: 10; stroke-linecap: butt; }
.tabbar .bold { stroke: var(--text); stroke-width: 17; }
.gesture {
  display: flex;
  justify-content: center;
  height: 44px;
  padding-top: 19px;
  background: #000;
}
.gesture span {
  width: 324px;
  height: 11px;
  border-radius: 5px;
  background: #5f5f5f;
}
```
